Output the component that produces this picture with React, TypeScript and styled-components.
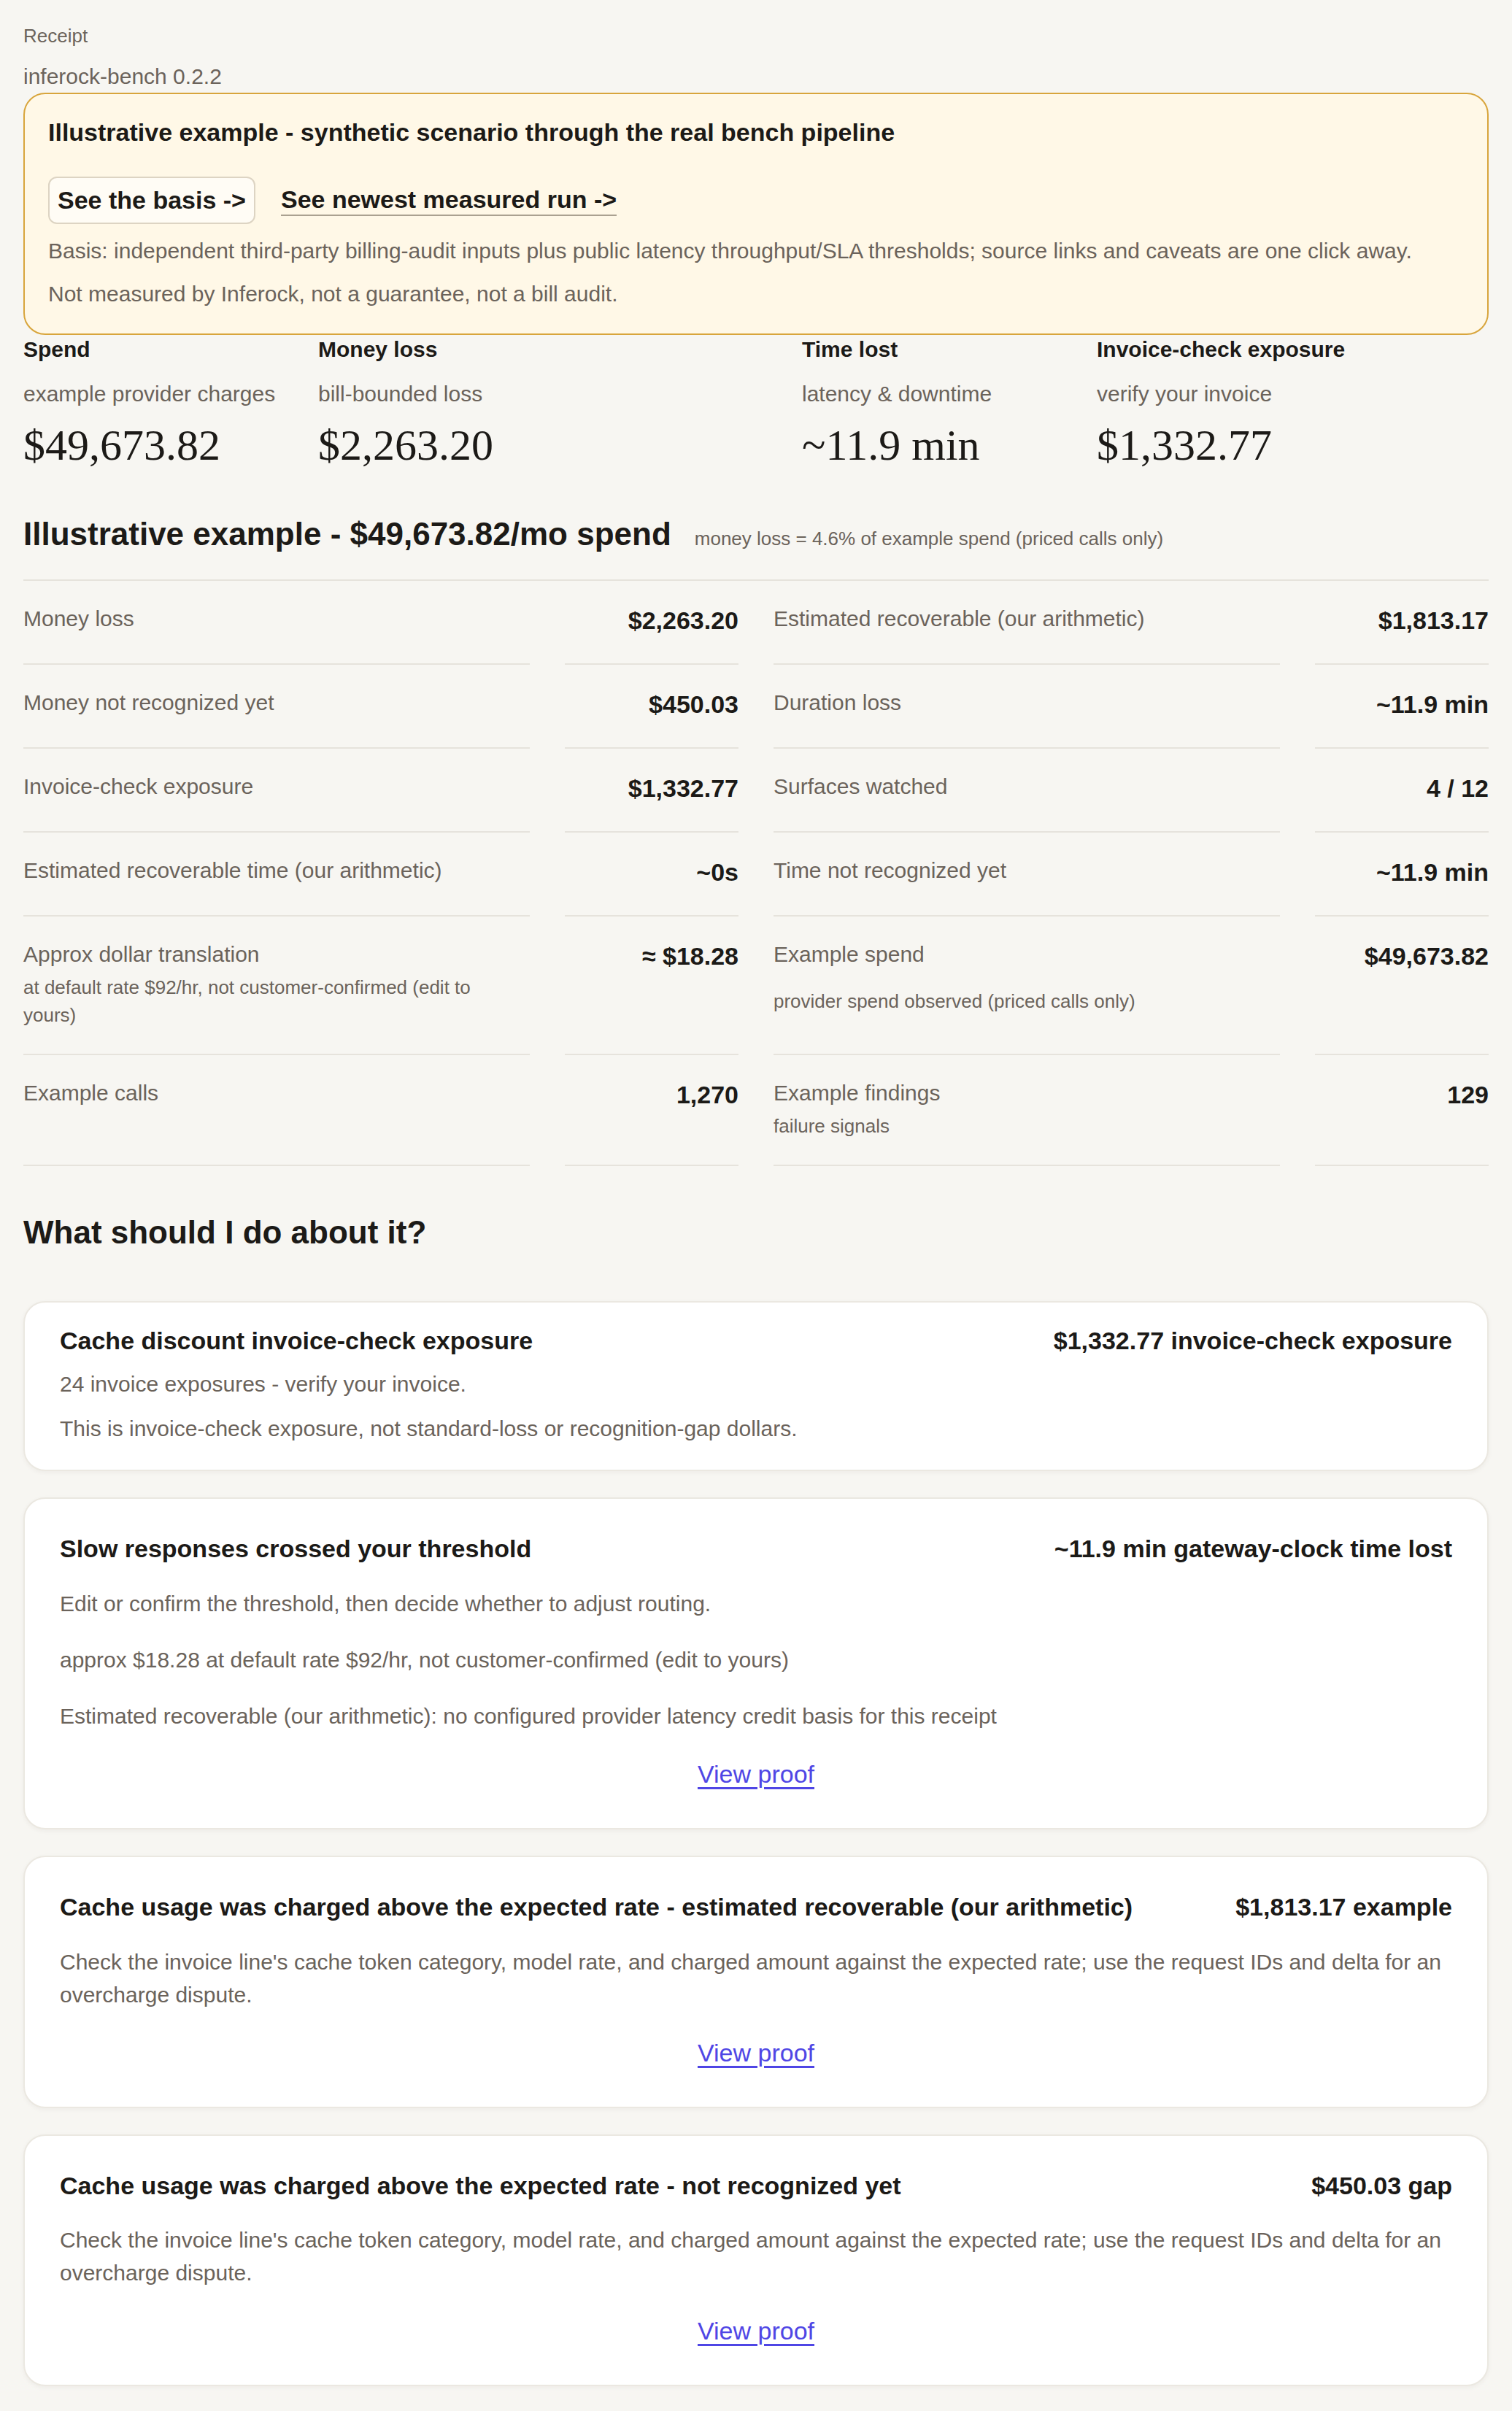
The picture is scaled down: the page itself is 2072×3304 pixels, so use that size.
import React from 'react';
import styled, { createGlobalStyle } from 'styled-components';

const ink = '#1c1a17';
const muted = '#6b635b';
const rule = '#e6e3dc';

interface Stat {
  label: string;
  hint: string;
  value: string;
}

interface LedgerItem {
  label: string;
  value: string;
  note?: string;
}

interface Finding {
  title: string;
  amount: string;
  lines: string[];
  kind: 'exposure' | 'finding';
}

const moneyStats: Stat[] = [
  { label: 'Spend', hint: 'example provider charges', value: '$49,673.82' },
  { label: 'Money loss', hint: 'bill-bounded loss', value: '$2,263.20' },
];

const timeStats: Stat[] = [
  { label: 'Time lost', hint: 'latency & downtime', value: '~11.9 min' },
  { label: 'Invoice-check exposure', hint: 'verify your invoice', value: '$1,332.77' },
];

// left / right pairs share a row
const ledgerRows: [LedgerItem, LedgerItem][] = [
  [
    { label: 'Money loss', value: '$2,263.20' },
    { label: 'Estimated recoverable (our arithmetic)', value: '$1,813.17' },
  ],
  [
    { label: 'Money not recognized yet', value: '$450.03' },
    { label: 'Duration loss', value: '~11.9 min' },
  ],
  [
    { label: 'Invoice-check exposure', value: '$1,332.77' },
    { label: 'Surfaces watched', value: '4 / 12' },
  ],
  [
    { label: 'Estimated recoverable time (our arithmetic)', value: '~0s' },
    { label: 'Time not recognized yet', value: '~11.9 min' },
  ],
  [
    {
      label: 'Approx dollar translation',
      value: '≈ $18.28',
      note: 'at default rate $92/hr, not customer-confirmed (edit to yours)',
    },
    {
      label: 'Example spend',
      value: '$49,673.82',
      note: 'provider spend observed (priced calls only)',
    },
  ],
  [
    { label: 'Example calls', value: '1,270' },
    { label: 'Example findings', value: '129', note: 'failure signals' },
  ],
];

const overchargeText =
  "Check the invoice line's cache token category, model rate, and charged amount against the expected rate; use the request IDs and delta for an overcharge dispute.";

const findings: Finding[] = [
  {
    kind: 'exposure',
    title: 'Cache discount invoice-check exposure',
    amount: '$1,332.77 invoice-check exposure',
    lines: [
      '24 invoice exposures - verify your invoice.',
      'This is invoice-check exposure, not standard-loss or recognition-gap dollars.',
    ],
  },
  {
    kind: 'finding',
    title: 'Slow responses crossed your threshold',
    amount: '~11.9 min gateway-clock time lost',
    lines: [
      'Edit or confirm the threshold, then decide whether to adjust routing.',
      'approx $18.28 at default rate $92/hr, not customer-confirmed (edit to yours)',
      'Estimated recoverable (our arithmetic): no configured provider latency credit basis for this receipt',
    ],
  },
  {
    kind: 'finding',
    title: 'Cache usage was charged above the expected rate - estimated recoverable (our arithmetic)',
    amount: '$1,813.17 example',
    lines: [overchargeText],
  },
  {
    kind: 'finding',
    title: 'Cache usage was charged above the expected rate - not recognized yet',
    amount: '$450.03 gap',
    lines: [overchargeText],
  },
];

export default function App() {
  return (
    <>
      <GlobalStyle />
      <Page>
        <Eyebrow>Receipt</Eyebrow>
        <Version>inferock-bench 0.2.2</Version>

        <Banner>
          <BannerTitle>Illustrative example - synthetic scenario through the real bench pipeline</BannerTitle>
          <Actions>
            <BasisButton href='#basis'>See the basis -&gt;</BasisButton>
            <RunLink href='#latest'>See newest measured run -&gt;</RunLink>
          </Actions>
          <Note>
            Basis: independent third-party billing-audit inputs plus public latency throughput/SLA thresholds; source
            links and caveats are one click away.
          </Note>
          <Note>Not measured by Inferock, not a guarantee, not a bill audit.</Note>
        </Banner>

        <Stats>
          {[moneyStats, timeStats].map((group, gi) => (
            <StatGroup key={gi}>
              {group.map((s) => (
                <div key={s.label}>
                  <StatLabel>{s.label}</StatLabel>
                  <StatHint>{s.hint}</StatHint>
                  <StatValue>{s.value}</StatValue>
                </div>
              ))}
            </StatGroup>
          ))}
        </Stats>

        <SectionHeader>
          <SectionTitle>Illustrative example - $49,673.82/mo spend</SectionTitle>
          <SectionAside>money loss = 4.6% of example spend (priced calls only)</SectionAside>
        </SectionHeader>

        <Ledger>
          {ledgerRows.map((pair) =>
            pair.map((item) => (
              <React.Fragment key={item.label}>
                <LedgerLabel>
                  <span>{item.label}</span>
                  {item.note && <LedgerNote>{item.note}</LedgerNote>}
                </LedgerLabel>
                <LedgerValue>{item.value}</LedgerValue>
              </React.Fragment>
            ))
          )}
        </Ledger>

        <ActionsTitle>What should I do about it?</ActionsTitle>

        <CardList>
          {findings.map((f) => (
            <Card key={f.title} $kind={f.kind}>
              <CardHead>
                <CardTitle>{f.title}</CardTitle>
                <CardAmount>{f.amount}</CardAmount>
              </CardHead>
              {f.lines.map((line) => (
                <CardText key={line}>{line}</CardText>
              ))}
              {f.kind === 'finding' && <ProofLink href='#proof'>View proof</ProofLink>}
            </Card>
          ))}
        </CardList>
      </Page>
    </>
  );
}

const GlobalStyle = createGlobalStyle`
  * {
    box-sizing: border-box;
  }
  html,
  body {
    margin: 0;
    background: #f7f6f2;
  }
  body {
    color: ${ink};
    font-family: 'Liberation Sans', Arial, sans-serif;
  }
`;

const Page = styled.main`
  padding: 32px;
`;

const Eyebrow = styled.div`
  margin-bottom: 15px;
  font-size: 26px;
  line-height: 1.35;
  color: ${muted};
`;

const Version = styled.div`
  font-size: 30px;
  line-height: 1.5;
  color: ${muted};
`;

const Banner = styled.section`
  padding: 32px;
  background: #fff8e7;
  border: 2px solid #d8a53c;
  border-radius: 30px;
`;

const BannerTitle = styled.h2`
  margin: 0 0 40px;
  font-size: 34px;
  line-height: 1.2;
  font-weight: 700;
`;

const Actions = styled.div`
  display: flex;
  align-items: center;
  gap: 35px;
`;

const BasisButton = styled.a`
  display: inline-block;
  padding: 10px 11px;
  font-size: 34px;
  font-weight: 700;
  line-height: 1.2;
  color: ${ink};
  text-decoration: none;
  background: #fffcf5;
  border: 2px solid #ddd4c3;
  border-radius: 12px;
`;

const RunLink = styled.a`
  display: inline-block;
  font-size: 34px;
  font-weight: 700;
  line-height: 1.2;
  color: ${ink};
  text-decoration: none;
  border-bottom: 2px solid #aaa191;
`;

const Note = styled.p`
  margin: 14px 0 0;
  font-size: 30px;
  line-height: 1.5;
  color: ${muted};
`;

const Stats = styled.div`
  display: grid;
  grid-template-columns: 1fr 1fr;
  column-gap: 126px;
  margin-top: 2px;
`;

const StatGroup = styled.div`
  display: grid;
  grid-template-columns: 380px 1fr;
  column-gap: 24px;
`;

const StatLabel = styled.div`
  font-size: 30px;
  font-weight: 700;
  line-height: 1.2;
`;

const StatHint = styled.div`
  margin-top: 20px;
  font-size: 30px;
  line-height: 1.5;
  color: ${muted};
  white-space: nowrap;
`;

const StatValue = styled.div`
  margin-top: 12px;
  font-family: 'Liberation Serif', 'Times New Roman', serif;
  font-size: 60px;
  line-height: 1.2;
`;

const SectionHeader = styled.div`
  display: flex;
  align-items: baseline;
  gap: 32px;
  margin-top: 60px;
  padding-bottom: 36px;
  border-bottom: 2px solid ${rule};
`;

const SectionTitle = styled.h2`
  margin: 0;
  font-size: 44px;
  line-height: 1.2;
  font-weight: 700;
`;

const SectionAside = styled.span`
  font-size: 26px;
  color: ${muted};
`;

const Ledger = styled.div`
  display: grid;
  grid-template-columns: 1fr 238px 1fr 238px;
  column-gap: 48px;
`;

const LedgerLabel = styled.div`
  display: flex;
  flex-direction: column;
  padding: 29px 56px 33px 0;
  font-size: 30px;
  line-height: 1.5;
  color: ${muted};
  border-bottom: 2px solid ${rule};
`;

const LedgerNote = styled.div`
  flex: 1;
  display: flex;
  align-items: center;
  margin-top: 5px;
  font-size: 26px;
  line-height: 1.46;
`;

const LedgerValue = styled.div`
  padding: 29px 0 33px;
  text-align: right;
  font-size: 34px;
  font-weight: 700;
  line-height: 1.5;
  border-bottom: 2px solid ${rule};
`;

const ActionsTitle = styled.h2`
  margin: 65px 0 67px;
  font-size: 44px;
  line-height: 1.2;
  font-weight: 700;
`;

const CardList = styled.div`
  display: flex;
  flex-direction: column;
  gap: 36px;
`;

const Card = styled.article<{ $kind: Finding['kind'] }>`
  display: flex;
  flex-direction: column;
  gap: ${({ $kind }) => ($kind === 'exposure' ? '16px' : '32px')};
  padding: ${({ $kind }) => ($kind === 'exposure' ? '32px 48px 34px' : '48px')};
  background: #fff;
  border: 2px solid #ebe8e1;
  border-radius: 30px;
  box-shadow: 0 2px 6px rgba(60, 48, 30, 0.05);
`;

const CardHead = styled.div`
  display: flex;
  justify-content: space-between;
  align-items: baseline;
  gap: 32px;
`;

const CardTitle = styled.h3`
  margin: 0;
  font-size: 34px;
  line-height: 1.2;
  font-weight: 700;
`;

const CardAmount = styled.span`
  font-size: 34px;
  font-weight: 700;
  line-height: 1.2;
  white-space: nowrap;
`;

const CardText = styled.p`
  margin: 0;
  font-size: 30px;
  line-height: 1.5;
  color: ${muted};
`;

const ProofLink = styled.a`
  align-self: center;
  font-size: 34px;
  line-height: 1.5;
  color: #4f46e5;
  text-decoration: underline;
  text-decoration-thickness: 3px;
  text-underline-offset: 6px;
`;
